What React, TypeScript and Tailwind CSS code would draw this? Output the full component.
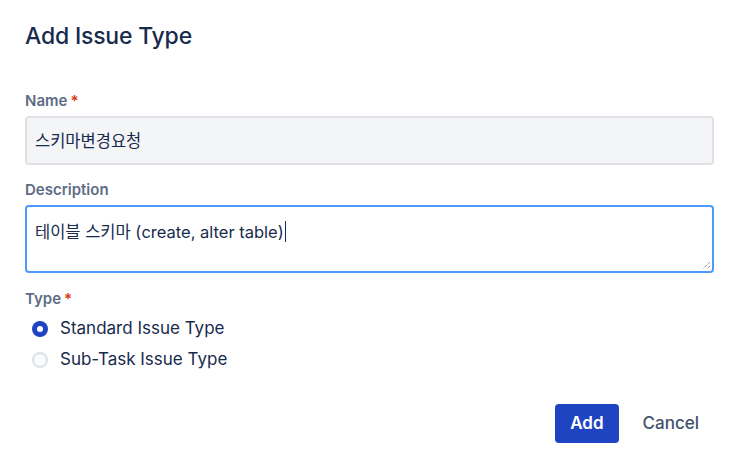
export default function App() {
  return (
    <div className="w-[736px] h-[468px] bg-white pl-[25px] pr-[22px] pt-[21px] font-['Inter','Noto_Sans_CJK_KR',sans-serif] text-[#172b4d]">
      <h1 className="text-[23px] font-medium leading-[30px] tracking-[-0.2px]">Add Issue Type</h1>

      <label className="mt-[40px] flex h-[20px] items-center text-[15px] font-semibold text-[#5e6c84]">
        Name<span className="ml-[3px] text-[#de350b]">*</span>
      </label>
      <div className="mt-[5px] flex h-[49px] items-center rounded-[4px] border-2 border-[#dfe1e6] bg-[#f4f5f7] px-[8px] pt-px text-[16.5px]">
        스키마변경요청
      </div>

      <label className="mt-[15px] flex h-[20px] items-center text-[15px] font-semibold text-[#5e6c84]">
        Description
      </label>
      <div className="relative mt-[5px] h-[68px] rounded-[4px] border-2 border-[#4c9aff] bg-white px-[8px] pt-[10px] text-[16.5px] leading-[20px]">
        테이블 스키마 (create, alter table)
        <span className="ml-px inline-block h-[21px] w-px translate-y-[4px] bg-[#172b4d]" />
        <svg className="absolute bottom-[1px] right-[1px]" width="9" height="9" viewBox="0 0 9 9">
          <path d="M8 1 L1 8 M8 5 L5 8" stroke="#6b6b6b" strokeWidth="1" strokeDasharray="1 1" />
        </svg>
      </div>

      <label className="mt-[16px] flex h-[20px] items-center text-[15px] font-semibold text-[#5e6c84]">
        Type<span className="ml-[3px] text-[#de350b]">*</span>
      </label>
      <div className="mt-[5px] flex flex-col">
        <div className="flex h-[30px] items-center gap-[12px] pl-[7px]">
          <span className="flex h-[16px] w-[16px] items-center justify-center rounded-full bg-[#1f44c2]">
            <span className="h-[6px] w-[6px] rounded-full bg-white" />
          </span>
          <span className="text-[17px]">Standard Issue Type</span>
        </div>
        <div className="flex h-[31px] items-center gap-[12px] pl-[7px]">
          <span className="h-[16px] w-[16px] rounded-full border-2 border-[#dfe1e6] bg-[#fafbfc]" />
          <span className="text-[17px]">Sub-Task Issue Type</span>
        </div>
      </div>

      <div className="mt-[29px] flex justify-end gap-[9px]">
        <button className="h-[39px] rounded-[4px] bg-[#1f44c2] px-[15px] pt-px text-[17px] font-semibold text-white">Add</button>
        <button className="h-[39px] rounded-[4px] px-[15px] pt-px text-[17px] font-medium text-[#42526e]">Cancel</button>
      </div>
    </div>
  );
}
